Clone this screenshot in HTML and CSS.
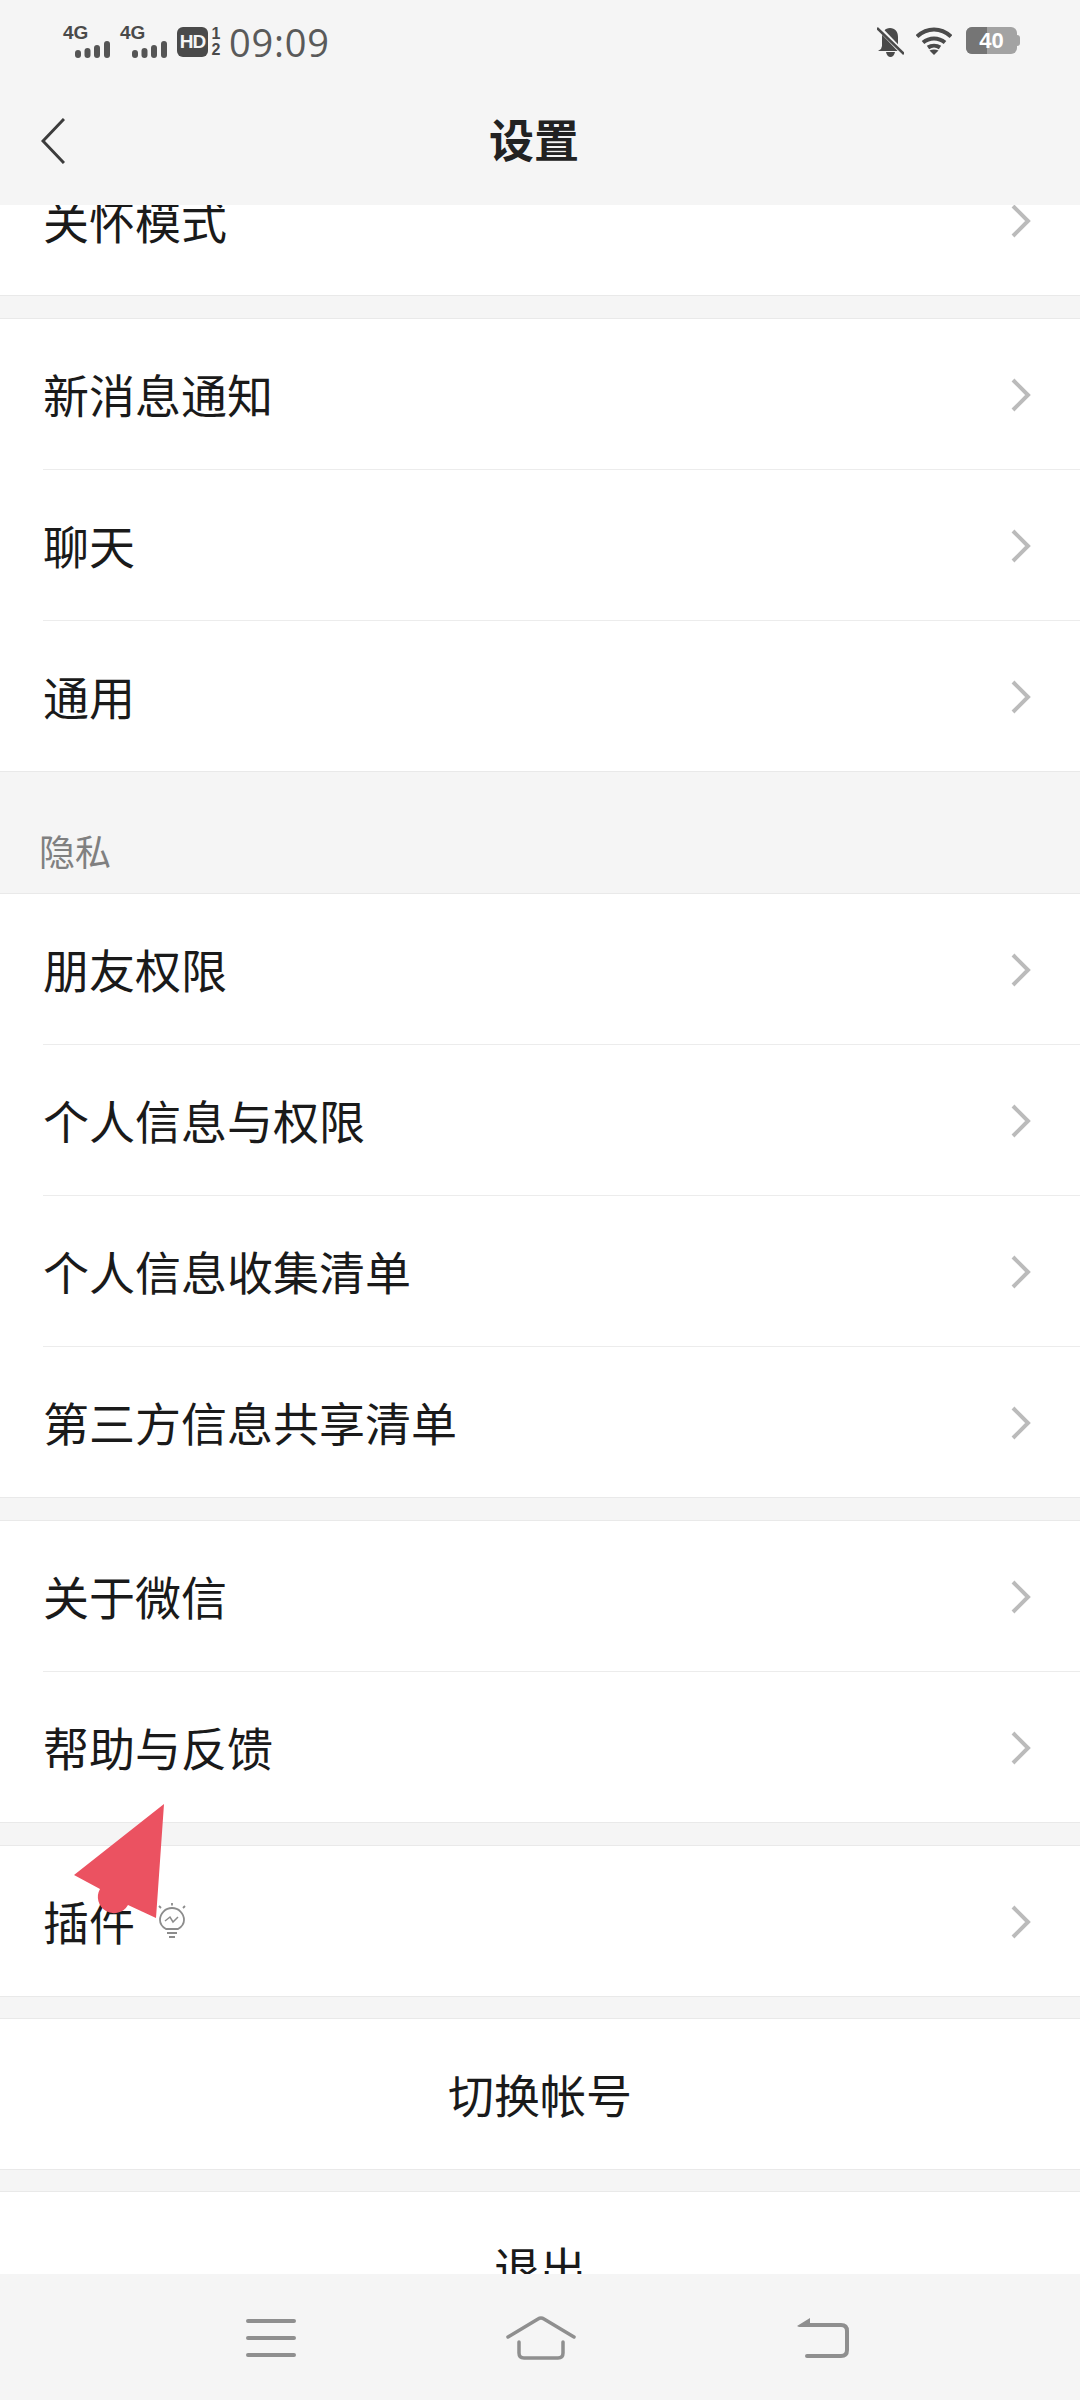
FILE: index.html
```html
<!DOCTYPE html>
<html lang="zh-CN">
<head>
    <meta charset="UTF-8">
    <title>设置</title>
    <link rel="stylesheet" href="styles.css">
</head>
<body>
    <div class="page">
        <header class="top">
            <div class="status">
                <div class="signal">
                    <span class="net">4G</span>
                    <svg class="bars" width="35" height="17" viewBox="0 0 35 17"><rect x="0" y="9" width="6" height="8" rx="3"/><rect x="9.500" y="7" width="6" height="10" rx="3"/><rect x="19" y="4" width="6" height="13" rx="3"/><rect x="29" y="0" width="6" height="17" rx="3"/></svg>
                </div>
                <div class="signal">
                    <span class="net">4G</span>
                    <svg class="bars" width="35" height="17" viewBox="0 0 35 17"><rect x="0" y="9" width="6" height="8" rx="3"/><rect x="9.500" y="7" width="6" height="10" rx="3"/><rect x="19" y="4" width="6" height="13" rx="3"/><rect x="29" y="0" width="6" height="17" rx="3"/></svg>
                </div>
                <span class="hd">HD</span>
                <span class="sims"><span>1</span><span>2</span></span>
                <span class="time">09:09</span>
                <span class="status-right">
                    <svg width="27" height="30" viewBox="0 0 27 30"><path fill="#4a4a4a" d="M13 1c5 0 8 3.500 8 9v9l3 5H1l3-2 1-3v-9c0-5 3-9 8-9zM9 25h9c-.5 3-2.500 5-4.500 5S9.500 28 9 25z"/><path stroke="#f5f5f5" stroke-width="5" d="M0-1 27 27"/><path stroke="#4a4a4a" stroke-width="2.500" d="M0 1 27 27"/></svg>
                    <svg width="36" height="28" viewBox="0 0 36 28"><g fill="none" stroke="#4a4a4a" stroke-width="4"><path d="M1 9.500c10-9.500 24-9.500 34 0"/><path d="M7 15.500c6.500-5.500 15.500-5.500 22 0"/><path d="M12 20.500c3.500-2.500 8.500-2.500 12 0"/></g><path fill="#4a4a4a" d="M13.500 23.500c3-1.500 6-1.500 9 0L18 28z"/></svg>
                    <span class="battery"><span class="battery-fill"></span><span class="battery-num">40</span><span class="battery-tip"></span></span>
                </span>
            </div>
            <div class="titlebar">
                <svg class="back" width="24" height="46" viewBox="0 0 24 46"><path fill="none" stroke="#3c3c3c" stroke-width="3" d="M23 1 2 23l21 22"/></svg>
                <h1 class="title">设置</h1>
            </div>
        </header>

        <main class="content">
            <div class="list">
                <section class="group">
                    <div class="row"><div class="row-in"><span>关怀模式</span><svg class="chev" width="20" height="34" viewBox="0 0 20 34"><path d="M2 2l15 15L2 32"/></svg></div></div>
                </section>
                <section class="group">
                    <div class="row"><div class="row-in"><span>新消息通知</span><svg class="chev" width="20" height="34" viewBox="0 0 20 34"><path d="M2 2l15 15L2 32"/></svg></div></div>
                    <div class="row"><div class="row-in"><span>聊天</span><svg class="chev" width="20" height="34" viewBox="0 0 20 34"><path d="M2 2l15 15L2 32"/></svg></div></div>
                    <div class="row"><div class="row-in"><span>通用</span><svg class="chev" width="20" height="34" viewBox="0 0 20 34"><path d="M2 2l15 15L2 32"/></svg></div></div>
                </section>
                <div class="label">隐私</div>
                <section class="group no-gap">
                    <div class="row"><div class="row-in"><span>朋友权限</span><svg class="chev" width="20" height="34" viewBox="0 0 20 34"><path d="M2 2l15 15L2 32"/></svg></div></div>
                    <div class="row"><div class="row-in"><span>个人信息与权限</span><svg class="chev" width="20" height="34" viewBox="0 0 20 34"><path d="M2 2l15 15L2 32"/></svg></div></div>
                    <div class="row"><div class="row-in"><span>个人信息收集清单</span><svg class="chev" width="20" height="34" viewBox="0 0 20 34"><path d="M2 2l15 15L2 32"/></svg></div></div>
                    <div class="row"><div class="row-in"><span>第三方信息共享清单</span><svg class="chev" width="20" height="34" viewBox="0 0 20 34"><path d="M2 2l15 15L2 32"/></svg></div></div>
                </section>
                <section class="group">
                    <div class="row"><div class="row-in"><span>关于微信</span><svg class="chev" width="20" height="34" viewBox="0 0 20 34"><path d="M2 2l15 15L2 32"/></svg></div></div>
                    <div class="row"><div class="row-in"><span>帮助与反馈</span><svg class="chev" width="20" height="34" viewBox="0 0 20 34"><path d="M2 2l15 15L2 32"/></svg></div></div>
                </section>
                <section class="group tight">
                    <div class="row"><div class="row-in">
                        <span class="plugin">插件
                            <svg class="bulb" width="28" height="36" viewBox="0 0 28 36"><g fill="none" stroke="#8c8c8c" stroke-width="1.800"><path d="M8 26c-3.500-2-6-5-6-9a12 12 0 0 1 24 0c0 4-2.500 7-6 9z"/><path d="M7 18l5-4 3 5 5-5" stroke-width="1.500"/><path d="M9 30h10M11 34h6"/><path d="M14 0v2.500M1 3l2 2M27 3l-2 2"/></g></svg>
                        </span>
                        <svg class="chev" width="20" height="34" viewBox="0 0 20 34"><path d="M2 2l15 15L2 32"/></svg>
                    </div></div>
                </section>
                <section class="group tight">
                    <div class="row"><div class="row-in center">切换帐号</div></div>
                </section>
                <section class="group">
                    <div class="row"><div class="row-in center">退出</div></div>
                </section>
            </div>
        </main>

        <nav class="navbar">
            <svg width="50" height="38" viewBox="0 0 50 38"><g stroke="#8f8f8f" stroke-width="4" stroke-linecap="round"><path d="M2 2h46M2 19h46M2 36h46"/></g></svg>
            <svg class="home" width="70" height="44" viewBox="0 0 70 44"><g fill="none" stroke="#8f8f8f" stroke-width="3.500" stroke-linecap="round"><path d="M2 21 32 3q3-2 6 0l30 18"/><path d="M13 26v11q0 5 5 5h34q5 0 5-5V26"/></g></svg>
            <svg width="52" height="40" viewBox="0 0 52 40"><path fill="none" stroke="#8f8f8f" stroke-width="4" stroke-linecap="round" d="M10 7h34q6 0 6 6v19q0 6-6 6H10"/><path fill="#8f8f8f" d="M0 8 13 0v9H2z"/></svg>
        </nav>

        <div class="pointer">
            <svg width="100" height="125" viewBox="0 0 100 125"><path fill="#eb5261" d="M94 2 86 116 58 103A15 15 0 1 1 30 87L4 73z"/></svg>
        </div>
    </div>
</body>
</html>
```

FILE: styles.css
```css
* {
    box-sizing: border-box;
}

body {
    margin: 0;
    background-color: #f5f5f5;
    color: #1a1a1a;
    font-family: "Noto Sans CJK SC", "Noto Sans", sans-serif;
}

.page {
    position: relative;
    width: 1080px;
    height: 2400px;
    display: flex;
    flex-direction: column;
    overflow: hidden;
}

.top {
    flex: none;
    height: 205px;
    background-color: #f5f5f5;
}

.status {
    height: 84px;
    padding: 25px 63px 0 63px;
    display: flex;
    align-items: flex-start;
}

.signal {
    width: 47px;
    margin-right: 10px;
    display: flex;
    flex-direction: column;
}

.net {
    font-family: "Liberation Sans", sans-serif;
    font-weight: bold;
    font-size: 19px;
    line-height: 16px;
    color: #4a4a4a;
}

.bars {
    align-self: flex-end;
    fill: #555;
}

.hd {
    width: 31px;
    height: 30px;
    margin-top: 2px;
    background-color: #4a4a4a;
    border-radius: 6px;
    color: #f5f5f5;
    font-family: "Liberation Sans", sans-serif;
    font-weight: bold;
    font-size: 19px;
    letter-spacing: -1px;
    line-height: 30px;
    text-align: center;
}

.sims {
    width: 12px;
    margin: 1px 0 0 2px;
    display: flex;
    flex-direction: column;
    font-family: "Liberation Sans", sans-serif;
    font-weight: bold;
    font-size: 16px;
    line-height: 16px;
    color: #4a4a4a;
    text-align: center;
}

.time {
    margin-left: 7px;
    font-family: "Open Sans", sans-serif;
    font-size: 38px;
    line-height: 34px;
    letter-spacing: 0.800px;
    color: #5a5a5a;
}

.status-right {
    margin-left: auto;
    padding-top: 2px;
    display: flex;
    gap: 12px;
}

.battery {
    position: relative;
    width: 51px;
    height: 27px;
    margin-left: 2px;
    background-color: #a3a3a3;
    border-radius: 6px;
    overflow: visible;
    text-align: center;
}

.battery-fill {
    position: absolute;
    left: 0;
    top: 0;
    width: 21px;
    height: 27px;
    background-color: #757575;
    border-radius: 6px 0 0 6px;
}

.battery-num {
    position: relative;
    font-family: "Liberation Sans", sans-serif;
    font-weight: bold;
    font-size: 22px;
    line-height: 27px;
    color: #fff;
}

.battery-tip {
    position: absolute;
    right: -3px;
    top: 8px;
    width: 3px;
    height: 11px;
    background-color: #a3a3a3;
    border-radius: 0 3px 3px 0;
}

.titlebar {
    padding: 0 77px 0 41px;
    height: 121px;
    display: flex;
    align-items: center;
}

.back {
    flex: none;
    margin-top: -7px;
}

.title {
    flex: 1;
    margin: 0 0 12px;
    text-align: center;
    font-size: 45px;
    font-weight: 700;
    color: #222;
}

.content {
    flex: 1;
    min-height: 0;
    overflow: hidden;
}

.list {
    margin-top: -61px;
}

.group {
    margin-bottom: 22px;
    background-color: #fff;
    border-top: 1px solid #e9e9e9;
    border-bottom: 1px solid #e9e9e9;
}

.tight {
    margin-bottom: 21px;
}

.no-gap {
    margin-top: -1px;
}

.row {
    padding-left: 43px;
    font-size: 46px;
}

.row-in {
    height: 150px;
    padding-right: 49px;
    display: flex;
    justify-content: space-between;
    align-items: center;
}

.row-in > span {
    margin-bottom: 3px;
}

.row + .row .row-in {
    height: 151px;
    border-top: 1px solid #ececec;
}

.center {
    justify-content: center;
    padding: 0 43px 3px 0;
}

.chev {
    margin-top: 2px;
    fill: none;
    stroke: #bbb;
    stroke-width: 4;
}

.plugin {
    display: flex;
    align-items: center;
}

.bulb {
    margin: 3px 0 0 23px;
}

.label {
    height: 122px;
    margin-top: -22px;
    padding: 56px 0 0 39px;
    font-size: 36px;
    line-height: 44px;
    color: #808080;
}

.navbar {
    flex: none;
    height: 126px;
    padding: 2px 231px 0 246px;
    background-color: #f5f5f5;
    display: flex;
    justify-content: space-between;
    align-items: center;
    position: relative;
}

.home {
    margin-right: 12px;
}

.pointer {
    position: absolute;
    left: 70px;
    top: 1802px;
}
```
